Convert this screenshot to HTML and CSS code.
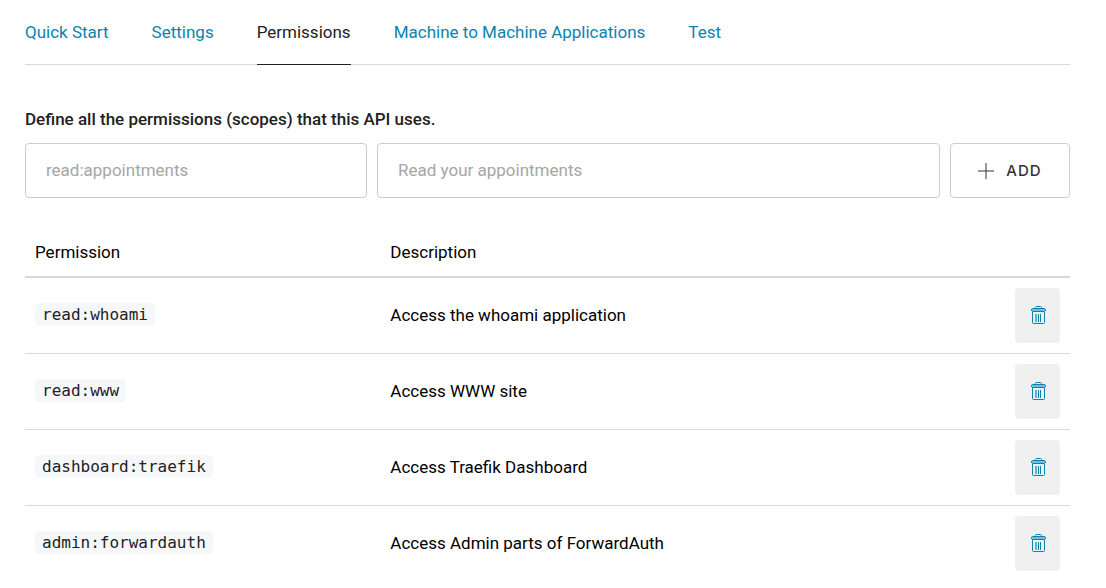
FILE: index.html
```html
<!DOCTYPE html>
<html lang="en">
<head>
<meta charset="utf-8">
<title>API Permissions</title>
<link rel="stylesheet" href="styles.css">
</head>
<body>
<svg class="sprite" aria-hidden="true">
<symbol id="trash" viewBox="-2 0 17 19">
<path fill="currentColor" fill-opacity="0.5" stroke="none" d="M1 2.500h13v3H1z"/>
<path d="M4.500 2.500v-1q0-1 1-1h4q1 0 1 1v1M0.500 5V3.500q0-1 1-1h12q1 0 1 1V5M1.500 5.500h12v11q0 1-1 1h-10q-1 0-1-1z"/>
<path stroke-opacity="0.6" stroke-width="2" d="M5 8v8"/>
<path d="M7.500 8v8M9.500 8v8"/>
</symbol>
</svg>
<main class="page">
<nav class="tabs">
<a class="tab" href="#quick">Quick Start</a>
<a class="tab" href="#settings">Settings</a>
<a class="tab tab-active" href="#permissions" aria-current="page">Permissions</a>
<a class="tab" href="#m2m">Machine to Machine Applications</a>
<a class="tab" href="#test">Test</a>
</nav>
<h1 class="heading">Define all the permissions (scopes) that this API uses.</h1>
<form class="form">
<input class="field" type="text" aria-label="Permission" placeholder="read:appointments">
<input class="field" type="text" aria-label="Description" placeholder="Read your appointments">
<button class="add" type="button"><svg class="plus" viewBox="0 0 16 16" aria-hidden="true"><path d="M8 0v16M0 8h16"/></svg>ADD</button>
</form>
<table class="table">
<thead><tr><th class="col-name" scope="col">Permission</th><th scope="col">Description</th><td class="col-action"></td></tr></thead>
<tbody>
<tr><td><code class="scope">read:whoami</code></td><td>Access the whoami application</td><td class="col-action"><button class="delete" type="button" aria-label="Delete read:whoami"><svg class="trash"><use href="#trash"/></svg></button></td></tr>
<tr><td><code class="scope">read:www</code></td><td>Access WWW site</td><td class="col-action"><button class="delete" type="button" aria-label="Delete read:www"><svg class="trash"><use href="#trash"/></svg></button></td></tr>
<tr><td><code class="scope">dashboard:traefik</code></td><td>Access Traefik Dashboard</td><td class="col-action"><button class="delete" type="button" aria-label="Delete dashboard:traefik"><svg class="trash"><use href="#trash"/></svg></button></td></tr>
<tr><td><code class="scope">admin:forwardauth</code></td><td>Access Admin parts of ForwardAuth</td><td class="col-action"><button class="delete" type="button" aria-label="Delete admin:forwardauth"><svg class="trash"><use href="#trash"/></svg></button></td></tr>
</tbody>
</table>
</main>
</body>
</html>
```

FILE: styles.css
```css
* { box-sizing: border-box; }
body { margin: 0; background: #fff; color: #000; font: 17px/24px Roboto, "Liberation Sans", sans-serif; }
.sprite { position: absolute; width: 0; height: 0; }
.page { padding: 0 36px 0 25px; }
.tabs { display: flex; gap: 43px; border-bottom: 1px solid #d9d9d9; }
.tab { padding: 20px 0; margin-bottom: -1px; color: #0a84ae; text-decoration: none; border-bottom: 1px solid transparent; }
.tab-active { color: #222; border-color: #222; }
.heading { margin: 42px 0 12px; font-size: 17px; line-height: 24px; font-weight: 500; color: #222; }
.form { display: grid; grid-template-columns: 342fr 563fr 120px; gap: 10px; }
.field { min-width: 0; height: 55px; padding: 0 20px 2px; border: 1px solid #ccc; border-radius: 4px; font: inherit; background: #fff; }
.field::placeholder { color: #a6a6a6; opacity: 1; }
.add { display: flex; align-items: center; justify-content: center; gap: 12px; border: 1px solid #ccc; border-radius: 4px; background: #fff; color: #333; font: 500 15px/24px Inter, sans-serif; letter-spacing: 1px; }
.plus { width: 16px; height: 16px; fill: none; stroke: #333; }
.table { width: 100%; margin-top: 30px; border-collapse: collapse; table-layout: fixed; }
.table th { padding: 12px 10px; text-align: left; font-weight: 400; border-bottom: 2px solid #d9d9d9; }
.table td { padding: 9px 10px 11px; border-bottom: 1px solid #d9d9d9; }
.table thead td { border-bottom: 2px solid #d9d9d9; }
.table tbody tr:last-child td { border-bottom: 0; }
.col-name { width: 34%; }
.table .col-action { width: 65px; padding: 10px; }
.scope { display: inline-block; vertical-align: top; padding: 0 7px; border-radius: 4px; background: #f5f7f9; color: #222; font: 16px/23px "DejaVu Sans Mono", monospace; }
.delete { display: flex; align-items: center; justify-content: center; width: 45px; height: 55px; padding: 0; border: 0; border-radius: 4px; background: #f0f0f0; color: #0a84ae; }
.trash { width: 17px; height: 19px; fill: none; stroke: currentColor; }
```
